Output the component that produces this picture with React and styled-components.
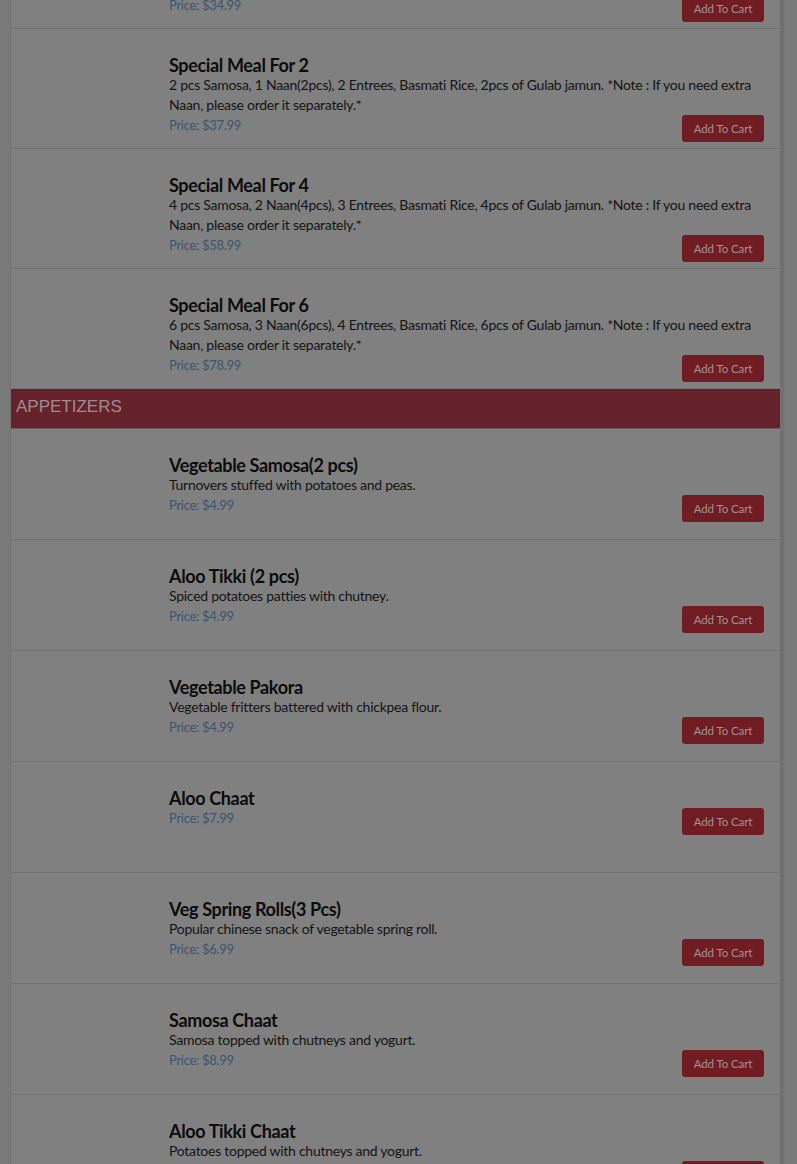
import styled, { createGlobalStyle } from "styled-components";

const GlobalStyle = createGlobalStyle`
  html, body {
    margin: 0;
    padding: 0;
    background: #7a7a7a;
    overflow: hidden;
  }
  body {
    font-family: Lato, "Noto Sans", sans-serif;
  }
`;

const Page = styled.div`
  padding: 0 16px 0 10px;
  margin-top: -91px;
`;

const Card = styled.div`
  background: #808080;
  border-left: 1px solid #727272;
  border-right: 1px solid #727272;
  box-shadow: 2px 0 3px rgba(0, 0, 0, 0.12);
`;

const SectionHeader = styled.div`
  height: 40px;
  box-sizing: border-box;
  display: flex;
  align-items: center;
  padding: 0 0 4px 5px;
  background: #66222a;
  color: #a08b8e;
  font-family: "Liberation Sans", Arial, sans-serif;
  font-size: 17px;
  border-bottom: 1px solid #76595b;
`;

const Row = styled.div`
  display: flex;
  min-height: 111px;
  box-sizing: border-box;
  padding: 26px 16px 6px 0;
  border-bottom: 1px solid #737373;
`;

const Thumb = styled.div`
  width: 158px;
  flex-shrink: 0;
`;

const Info = styled.div`
  flex: 1;
  display: flex;
  flex-direction: column;
`;

const Title = styled.h3`
  margin: 0;
  font-size: 18px;
  line-height: 20px;
  font-weight: 700;
  letter-spacing: -0.35px;
  color: #0c0c0c;
`;

const Desc = styled.p`
  margin: 0;
  font-size: 14px;
  line-height: 20px;
  letter-spacing: -0.27px;
  color: #141414;
`;

const Footer = styled.div`
  display: flex;
  justify-content: space-between;
  align-items: flex-start;
`;

const Price = styled.span`
  font-size: 13px;
  line-height: 20px;
  letter-spacing: -0.3px;
  color: #3d5572;
`;

const CartButton = styled.button`
  width: 82px;
  height: 27px;
  border: none;
  border-radius: 3px;
  background: #6f1d23;
  color: #a88f92;
  font-family: inherit;
  font-size: 11.5px;
  letter-spacing: -0.1px;
  cursor: pointer;
`;

const specials = [
  {
    name: "Special Meal For 1",
    desc: "1 pc Samosa, 1 Naan(1pc), 1 Entree, Basmati Rice, 1pc of Gulab jamun. *Note : If you need extra Naan, please order it separately.*",
    price: "34.99",
  },
  {
    name: "Special Meal For 2",
    desc: "2 pcs Samosa, 1 Naan(2pcs), 2 Entrees, Basmati Rice, 2pcs of Gulab jamun. *Note : If you need extra Naan, please order it separately.*",
    price: "37.99",
  },
  {
    name: "Special Meal For 4",
    desc: "4 pcs Samosa, 2 Naan(4pcs), 3 Entrees, Basmati Rice, 4pcs of Gulab jamun. *Note : If you need extra Naan, please order it separately.*",
    price: "58.99",
  },
  {
    name: "Special Meal For 6",
    desc: "6 pcs Samosa, 3 Naan(6pcs), 4 Entrees, Basmati Rice, 6pcs of Gulab jamun. *Note : If you need extra Naan, please order it separately.*",
    price: "78.99",
  },
];

const appetizers = [
  { name: "Vegetable Samosa(2 pcs)", desc: "Turnovers stuffed with potatoes and peas.", price: "4.99" },
  { name: "Aloo Tikki (2 pcs)", desc: "Spiced potatoes patties with chutney.", price: "4.99" },
  { name: "Vegetable Pakora", desc: "Vegetable fritters battered with chickpea flour.", price: "4.99" },
  { name: "Aloo Chaat", desc: "", price: "7.99" },
  { name: "Veg Spring Rolls(3 Pcs)", desc: "Popular chinese snack of vegetable spring roll.", price: "6.99" },
  { name: "Samosa Chaat", desc: "Samosa topped with chutneys and yogurt.", price: "8.99" },
  { name: "Aloo Tikki Chaat", desc: "Potatoes topped with chutneys and yogurt.", price: "8.99" },
];

function MenuItem({ item }) {
  return (
    <Row>
      <Thumb />
      <Info>
        <Title>{item.name}</Title>
        {item.desc && <Desc>{item.desc}</Desc>}
        <Footer>
          <Price>Price: ${item.price}</Price>
          <CartButton>Add To Cart</CartButton>
        </Footer>
      </Info>
    </Row>
  );
}

export default function App() {
  return (
    <>
      <GlobalStyle />
      <Page>
        <Card>
          {specials.map((item) => (
            <MenuItem key={item.name} item={item} />
          ))}
          <SectionHeader>APPETIZERS</SectionHeader>
          {appetizers.map((item) => (
            <MenuItem key={item.name} item={item} />
          ))}
        </Card>
      </Page>
    </>
  );
}
